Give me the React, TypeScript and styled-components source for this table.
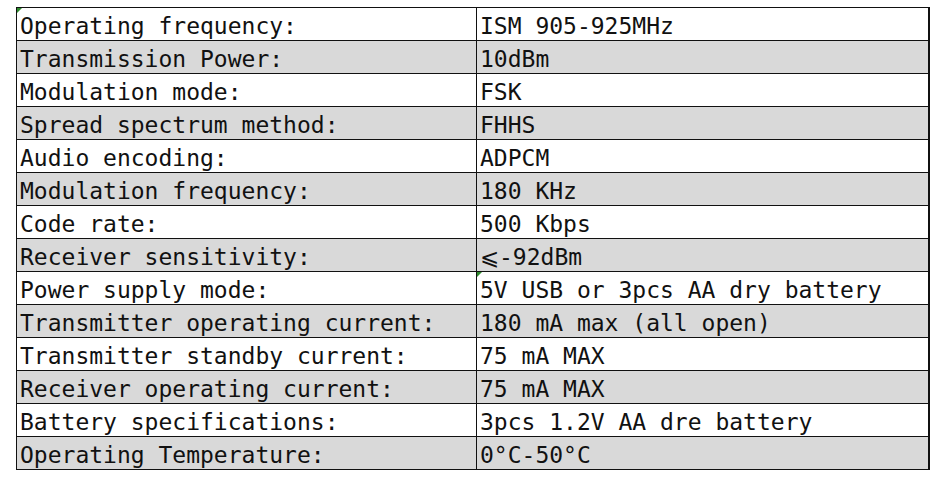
import styled, { createGlobalStyle } from "styled-components";

const specs: { label: string; value: string; mark?: "label" | "value" }[] = [
  { label: "Operating frequency:", value: "ISM 905-925MHz", mark: "label" },
  { label: "Transmission Power:", value: "10dBm" },
  { label: "Modulation mode:", value: "FSK" },
  { label: "Spread spectrum method:", value: "FHHS" },
  { label: "Audio encoding:", value: "ADPCM" },
  { label: "Modulation frequency:", value: "180 KHz" },
  { label: "Code rate:", value: "500 Kbps" },
  { label: "Receiver sensitivity:", value: "⩽-92dBm" },
  { label: "Power supply mode:", value: "5V USB or 3pcs AA dry battery", mark: "value" },
  { label: "Transmitter operating current:", value: "180 mA max (all open)" },
  { label: "Transmitter standby current:", value: "75 mA MAX" },
  { label: "Receiver operating current:", value: "75 mA MAX" },
  { label: "Battery specifications:", value: "3pcs 1.2V AA dre battery" },
  { label: "Operating Temperature:", value: "0°C-50°C" },
];

const App = function App(): JSX.Element {
  return (
    <>
      <GlobalStyle />
      <Page>
        <Table>
          {specs.map((row, i) => (
            <Row key={row.label} $shaded={i % 2 === 1}>
              <Cell $marked={row.mark === "label"}>{row.label}</Cell>
              <Cell $marked={row.mark === "value"}>{row.value}</Cell>
            </Row>
          ))}
        </Table>
      </Page>
    </>
  );
};

const GlobalStyle = createGlobalStyle`
  body {
    margin: 0;
    background: #ffffff;
  }
`;

const Page = styled.div`
  width: 945px;
  height: 477px;
  padding: 7px 0 0 16px;
  box-sizing: border-box;
`;

const Table = styled.div`
  width: 913px;
  display: grid;
  grid-template-columns: 460px 453px;
  border-top: 1px solid #111;
  border-left: 1px solid #111;
  font-family: "DejaVu Sans Mono", "Liberation Mono", monospace;
  font-size: 23px;
  color: #111;
`;

const Row = styled.div<{ $shaded: boolean }>`
  display: contents;

  & > div {
    background: ${(p) => (p.$shaded ? "#d9d9d9" : "#ffffff")};
  }
`;

const Cell = styled.div<{ $marked: boolean }>`
  position: relative;
  height: 33px;
  box-sizing: border-box;
  border-right: 1px solid #111;
  border-bottom: 1px solid #111;
  padding: 3px 0 0 3px;
  line-height: 30px;
  white-space: nowrap;

  &:last-child {
    border-right-width: 2px;
  }

  &::before {
    content: "";
    display: ${(p) => (p.$marked ? "block" : "none")};
    position: absolute;
    top: 0;
    left: 0;
    border-top: 5px solid #2e8b2e;
    border-right: 5px solid transparent;
  }
`;

export default App;
